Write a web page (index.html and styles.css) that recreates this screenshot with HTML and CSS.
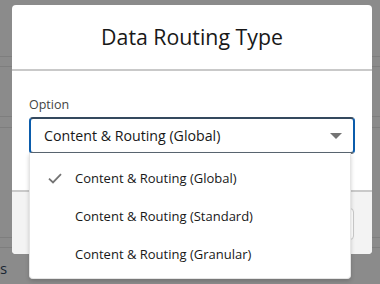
FILE: index.html
```html
<!DOCTYPE html>
<html>
<head>
<meta charset="utf-8">
<link rel="stylesheet" href="styles.css">
</head>
<body>
<div class="page">
  <div class="row r1"></div>
  <div class="row r2"></div>
  <div class="row r3"></div>
  <div class="row r4"></div>
  <div class="row r5"></div>
  <div class="row r6"></div>
  <div class="crumb">s</div>
</div>
<div class="modal">
  <header class="modal-header">
    <h2 class="title">Data Routing Type</h2>
  </header>
  <div class="modal-body">
    <label class="label">Option</label>
    <div class="combo">
      <div class="combo-input">
        <span class="combo-value">Content &amp; Routing (Global)</span>
        <span class="caret"></span>
      </div>
      <ul class="listbox">
        <li class="option selected">
          <span class="check"><svg width="14" height="11" viewBox="0 0 14 11"><path d="M1 5.6 L5 9.4 L13 1.2" fill="none" stroke="#747474" stroke-width="1.8"/></svg></span>
          <span>Content &amp; Routing (Global)</span>
        </li>
        <li class="option"><span class="check"></span><span>Content &amp; Routing (Standard)</span></li>
        <li class="option"><span class="check"></span><span>Content &amp; Routing (Granular)</span></li>
      </ul>
    </div>
  </div>
  <footer class="modal-footer">
    <button class="btn">Cancel</button>
  </footer>
</div>
</body>
</html>
```
FILE: styles.css
```css
* { box-sizing: border-box; }
html, body { margin: 0; padding: 0; }
body {
  width: 380px;
  height: 284px;
  overflow: hidden;
  background: #8b8b8b;
  font-family: "Open Sans", "Noto Sans", sans-serif;
  position: relative;
}
.page {
  position: absolute;
  inset: 0;
  display: flex;
  flex-direction: column;
}
.row { border-bottom: 1px solid #7e7e7e; flex: none; }
.r1 { height: 57px; }
.r2 { height: 10px; }
.r3 { height: 50px; }
.r4 { height: 11px; }
.r5 { height: 110px; }
.r6 { height: 10px; }
.crumb {
  margin-top: 10px;
  font-size: 15px;
  line-height: 20px;
  color: #1a2633;
}

.modal {
  position: absolute;
  left: 12px;
  top: 5px;
  width: 360px;
  height: 249px;
  background: #fff;
  border-radius: 4px;
  display: flex;
  flex-direction: column;
}
.modal-header {
  height: 66px;
  border-bottom: 2px solid #c9c9c9;
  display: flex;
  align-items: center;
  justify-content: center;
  padding-bottom: 1px;
}
.title {
  margin: 0;
  font-weight: 400;
  font-size: 21.3px;
  color: #181818;
}
.modal-body {
  flex: 1;
  padding: 26px 17px 0 17px;
}
.label {
  display: block;
  font-size: 12.5px;
  line-height: 16px;
  color: #444;
  margin-bottom: 4px;
}
.combo { position: relative; }
.combo-input {
  height: 37px;
  border: 2px solid #0b5cab;
  border-top-color: #34495e;
  border-bottom-color: #5a6672;
  border-radius: 4px;
  display: flex;
  align-items: center;
  padding: 0 11px 0 13px;
}
.combo-value {
  flex: 1;
  font-size: 14.2px;
  color: #181818;
}
.caret {
  width: 0;
  height: 0;
  border-left: 6px solid transparent;
  border-right: 6px solid transparent;
  border-top: 6px solid #747474;
}
.listbox {
  position: absolute;
  left: 0;
  top: 36px;
  width: 322px;
  margin: 0;
  padding: 6px 0 5px;
  list-style: none;
  background: #fff;
  border: 1px solid #e5e5e5;
  border-top: none;
  border-radius: 0 0 4px 4px;
  box-shadow: 0 2px 4px rgba(0,0,0,0.18);
  z-index: 2;
}
.option {
  height: 38px;
  display: flex;
  align-items: center;
  padding-left: 18px;
  font-size: 13px;
  color: #181818;
}
.check {
  width: 27px;
  flex: none;
  display: flex;
  align-items: center;
}
.modal-footer {
  height: 64px;
  border-top: 2px solid #c9c9c9;
  background: #f3f3f3;
  border-radius: 0 0 4px 4px;
  display: flex;
  align-items: center;
  justify-content: flex-end;
  padding: 0 18px;
}
.btn {
  height: 32px;
  padding: 0 16px;
  background: #fff;
  border: 1px solid #c9c9c9;
  border-radius: 4px;
  font-family: inherit;
  font-size: 13px;
  color: #0b5cab;
  margin-top: 1px;
}
```
